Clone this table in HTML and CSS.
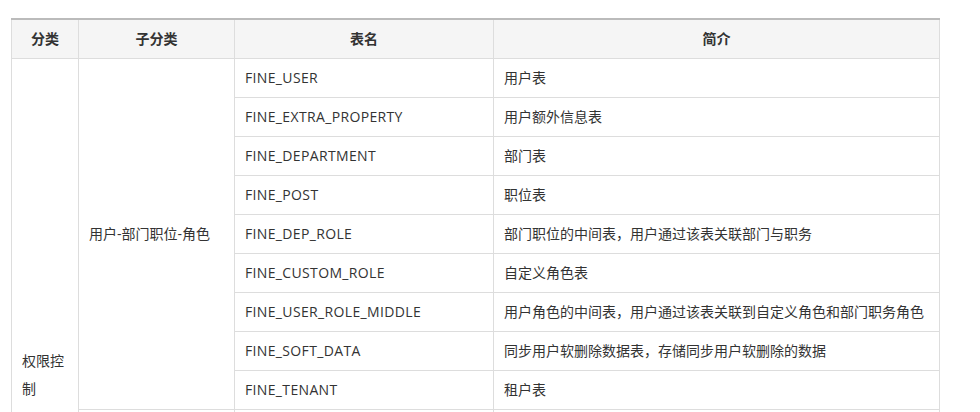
FILE: index.html
```html
<!DOCTYPE html>
<html lang="zh-CN">
<head>
<meta charset="utf-8">
<link rel="stylesheet" href="styles.css">
</head>
<body>
<div class="wrap">
<table class="tbl">
  <colgroup>
    <col class="c1"><col class="c2"><col class="c3"><col class="c4">
  </colgroup>
  <thead>
    <tr><th>分类</th><th>子分类</th><th>表名</th><th>简介</th></tr>
  </thead>
  <tbody>
    <tr>
      <td rowspan="16" class="cat">权限控制</td>
      <td rowspan="9">用户-部门职位-角色</td>
      <td class="nm">FINE_USER</td><td>用户表</td>
    </tr>
    <tr><td class="nm">FINE_EXTRA_PROPERTY</td><td>用户额外信息表</td></tr>
    <tr><td class="nm">FINE_DEPARTMENT</td><td>部门表</td></tr>
    <tr><td class="nm">FINE_POST</td><td>职位表</td></tr>
    <tr><td class="nm">FINE_DEP_ROLE</td><td>部门职位的中间表，用户通过该表关联部门与职务</td></tr>
    <tr><td class="nm">FINE_CUSTOM_ROLE</td><td>自定义角色表</td></tr>
    <tr><td class="nm">FINE_USER_ROLE_MIDDLE</td><td>用户角色的中间表，用户通过该表关联到自定义角色和部门职务角色</td></tr>
    <tr><td class="nm">FINE_SOFT_DATA</td><td>同步用户软删除数据表，存储同步用户软删除的数据</td></tr>
    <tr><td class="nm">FINE_TENANT</td><td>租户表</td></tr>
    <tr>
      <td rowspan="7">权限</td>
      <td class="nm">FINE_AUTHORITY</td><td>权限表</td>
    </tr>
    <tr><td class="nm">FINE_AUTHORITY_OBJECT</td><td>权限实体表</td></tr>
    <tr><td class="nm">FINE_AUTH_PREFERENCE</td><td>权限偏好表</td></tr>
    <tr><td class="nm">FINE_AUTHORITY_ENTITY</td><td>权限对象表</td></tr>
    <tr><td class="nm">FINE_CONF_ENTITY</td><td>配置表</td></tr>
    <tr><td class="nm">FINE_LAST_LOGIN</td><td>上次登录表</td></tr>
    <tr><td class="nm">FINE_LOGIN_LOCK</td><td>登录锁定表</td></tr>
  </tbody>
</table>
</div>
</body>
</html>
```

FILE: styles.css
```css
html, body {
  margin: 0;
  padding: 0;
  background: #fff;
}
.wrap {
  padding: 18px 0 0 11px;
}
.tbl {
  border-collapse: collapse;
  table-layout: fixed;
  width: 928px;
  font-family: "Open Sans", "Noto Sans CJK SC", sans-serif;
  font-size: 14px;
  color: #333;
}
.c1 { width: 67px; }
.c2 { width: 156px; }
.c3 { width: 259px; }
.c4 { width: 446px; }
.tbl th, .tbl td {
  border: 1px solid #ddd;
  padding: 5px 10px;
  line-height: 28px;
  text-align: left;
  vertical-align: middle;
}
.tbl thead th {
  background: #f5f5f5;
  border-top: 2px solid #bbb;
  font-weight: bold;
  text-align: center;
  color: #333;
}
.tbl td.nm {
  letter-spacing: 0.35px;
}
.tbl td.cat {
  padding-top: 13px;
}
```
